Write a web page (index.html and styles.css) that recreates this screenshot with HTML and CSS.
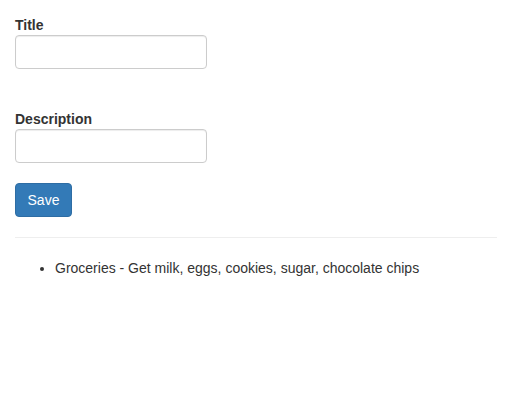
FILE: index.html
```html
<!DOCTYPE html>
<html>
<head>
<meta charset="utf-8">
<link rel="stylesheet" href="styles.css">
</head>
<body>
<div class="container">
  <form class="form">
    <div class="form-group">
      <label class="label" for="title">Title</label>
      <input class="input" id="title" type="text">
    </div>
    <div class="form-group desc">
      <label class="label" for="desc">Description</label>
      <input class="input" id="desc" type="text">
    </div>
    <button class="btn" type="button">Save</button>
  </form>
  <hr class="divider">
  <ul class="list">
    <li>Groceries - Get milk, eggs, cookies, sugar, chocolate chips</li>
  </ul>
</div>
</body>
</html>
```
FILE: styles.css
```css
* { box-sizing: border-box; }
html, body { margin: 0; padding: 0; background: #fff; }
body {
  font-family: "Liberation Sans", Arial, sans-serif;
  font-size: 14px;
  line-height: 20px;
  color: #333;
}
.container { padding: 15px 15px 0 15px; }
.form { display: flex; flex-direction: column; align-items: flex-start; }
.form-group { display: flex; flex-direction: column; align-items: flex-start; }
.desc { margin-top: 40px; }
.label {
  font-weight: bold;
  line-height: 20px;
  margin-bottom: 0;
}
.input {
  width: 192px;
  height: 34px;
  border: 1px solid #ccc;
  border-radius: 4px;
  box-shadow: inset 0 1px 1px rgba(0,0,0,0.075);
  padding: 6px 12px;
  font: inherit;
  background: #fff;
  margin: 0;
}
.btn {
  margin-top: 20px;
  width: 57px;
  height: 34px;
  padding: 6px 0;
  background: #337ab7;
  border: 1px solid #2e6da4;
  border-radius: 4px;
  color: #fff;
  font: inherit;
  line-height: 20px;
  text-align: center;
}
.divider {
  margin: 20px 0 20px 0;
  border: 0;
  border-top: 1px solid #eee;
  height: 0;
}
.list {
  margin: 0;
  padding-left: 40px;
}
```
